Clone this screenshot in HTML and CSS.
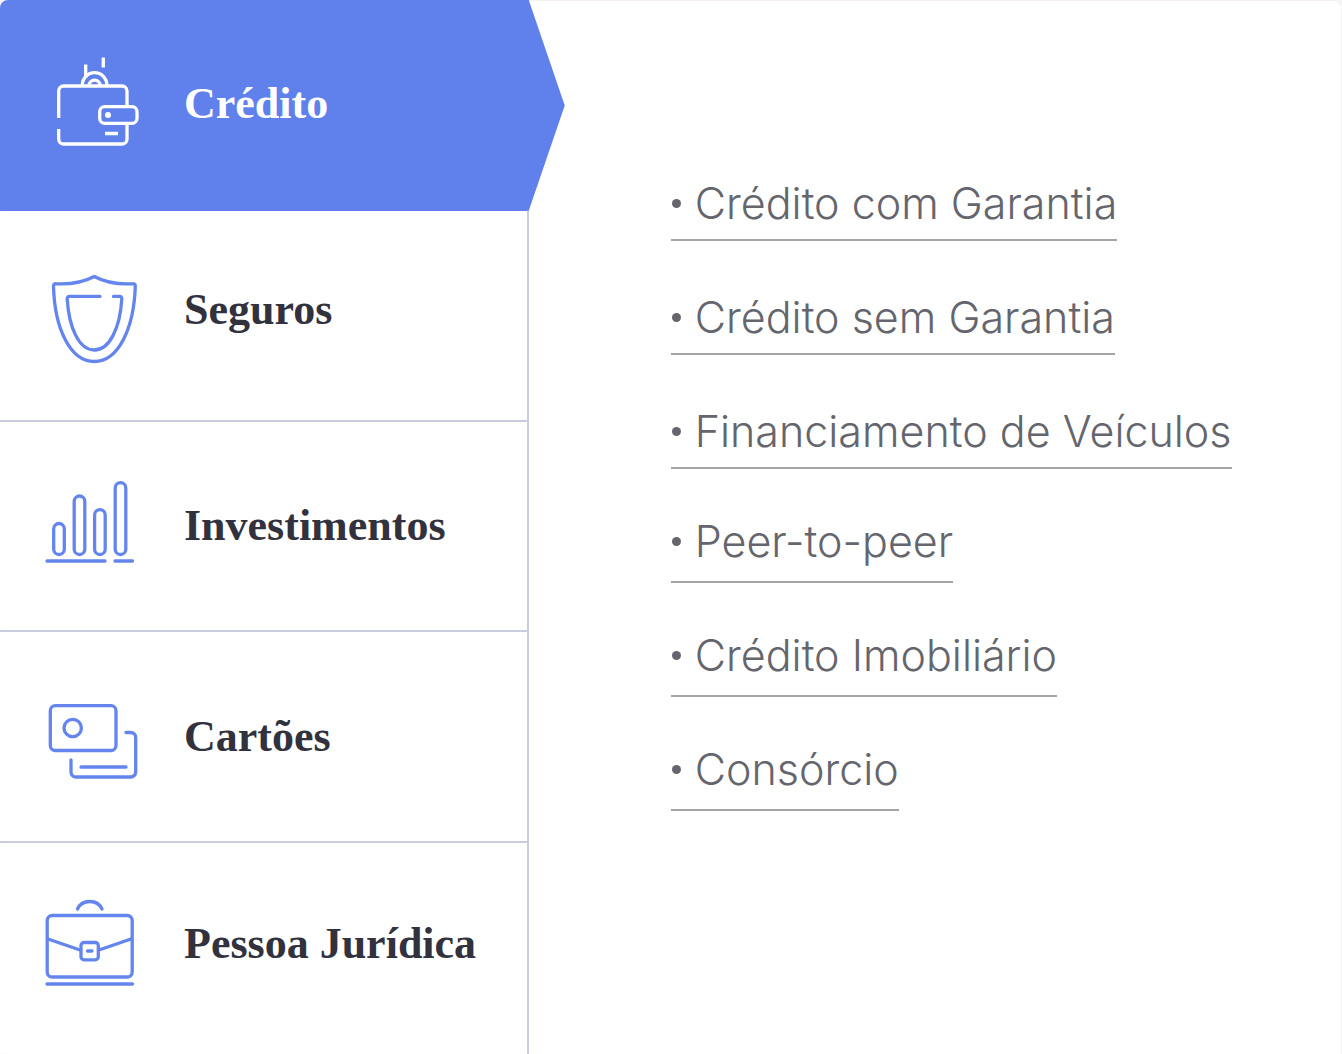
FILE: index.html
```html
<!DOCTYPE html>
<html lang="pt-BR">
<head>
<meta charset="utf-8">
<meta name="viewport" content="width=device-width, initial-scale=1">
<title>Produtos financeiros</title>
<link rel="stylesheet" href="styles.css">
</head>
<body>
<main class="panel">
  <nav class="tabs" aria-label="Categorias">
    <button class="tab tab--active" type="button" aria-pressed="true">
      <svg class="tab__icon" viewBox="40 44 104 120" aria-hidden="true">
        <path d="M58.7 118V91a5 5 0 0 1 5-5H122a5 5 0 0 1 5 5v15M58.7 129v10a5 5 0 0 0 5 5H122a5 5 0 0 0 5-5v-15"/>
        <rect x="99.7" y="106.7" width="37.3" height="16.6" rx="5"/>
        <path d="M82.3 86v-1a12.3 12.3 0 0 1 24.6 0v1M88.8 86a5.8 5.8 0 0 1 11.6 0M85.7 64.5V78M103.3 57.5V67.500M105 133.500h13"/>
        <circle class="solid" cx="108" cy="115" r="3"/>
      </svg>
      <span class="tab__label">Crédito</span>
    </button>
    <button class="tab tab--raised" type="button" aria-pressed="false">
      <svg class="tab__icon" viewBox="40 255 104 120" aria-hidden="true">
        <path d="M94.300 276.500Q78 285 56 283.800Q53.500 283.500 53.500 286C54.500 328 70 361.500 94.300 361.500S134 328 135.300 286Q135.300 283.500 132.600 283.800Q110 285 94.300 276.500Z"/>
        <path class="round" d="M100 296.400H69.500Q67 296.400 67.200 299C69 328 79 350 94.300 350S120 328 121.800 299Q122 296.400 119.500 296.400H113.500"/>
      </svg>
      <span class="tab__label">Seguros</span>
    </button>
    <button class="tab" type="button" aria-pressed="false">
      <svg class="tab__icon" viewBox="40 466 104 120" aria-hidden="true">
        <rect x="53.700" y="523.500" width="10.600" height="31" rx="5.300"/>
        <rect x="74.200" y="496" width="10.600" height="58.500" rx="5.300"/>
        <rect x="94.600" y="509.700" width="10.600" height="44.800" rx="5.300"/>
        <rect x="115.200" y="482.700" width="10.600" height="71.800" rx="5.300"/>
        <path class="round" d="M47 561h58M115 561h17.500"/>
      </svg>
      <span class="tab__label">Investimentos</span>
    </button>
    <button class="tab" type="button" aria-pressed="false">
      <svg class="tab__icon" viewBox="40 677 104 120" aria-hidden="true">
        <rect x="50.300" y="705.700" width="65.700" height="44.800" rx="5"/>
        <circle cx="72.700" cy="728" r="8.700"/>
        <path class="round" d="M71 760v12a5 5 0 0 0 5 5h54.700a5 5 0 0 0 5-5v-34.500a5 5 0 0 0-5-5H126M81 767h45"/>
      </svg>
      <span class="tab__label">Cartões</span>
    </button>
    <button class="tab tab--raised" type="button" aria-pressed="false">
      <svg class="tab__icon" viewBox="40 889 104 120" aria-hidden="true">
        <rect x="47.200" y="915.500" width="85" height="61.500" rx="5"/>
        <rect x="81" y="942.500" width="17.300" height="17.300" rx="3"/>
        <path class="round" d="M77.500 909C82 899 97.500 899 102 909M47 984h85.500M48 939l32 11M99 950l32-11M87.500 951h4.500"/>
      </svg>
      <span class="tab__label">Pessoa Jurídica</span>
    </button>
  </nav>
  <section class="content" aria-label="Crédito">
    <ul class="links">
      <li class="links__item"><a class="link" href="#garantia">Crédito com Garantia</a></li>
      <li class="links__item"><a class="link" href="#sem-garantia">Crédito sem Garantia</a></li>
      <li class="links__item"><a class="link" href="#veiculos">Financiamento de Veículos</a></li>
      <li class="links__item"><a class="link" href="#peer">Peer-to-peer</a></li>
      <li class="links__item"><a class="link" href="#imobiliario">Crédito Imobiliário</a></li>
      <li class="links__item"><a class="link" href="#consorcio">Consórcio</a></li>
    </ul>
  </section>
</main>
</body>
</html>
```
FILE: styles.css
```css
* {
  box-sizing: border-box;
}

body {
  margin: 0;
  background: #f7f4f2;
}

.panel {
  display: grid;
  grid-template-columns: 39.4% 1fr;
  min-height: 100vh;
  background: #fff;
  border-radius: 8px 8px 0 0;
  box-shadow: inset 0 1px 1px #f3f0ee, inset -1px 0 1px #f6f5f8;
}

.tabs {
  display: grid;
  grid-template-rows: repeat(5, 1fr);
  border-right: 2px solid #c9cde0;
}

.tab {
  position: relative;
  display: flex;
  align-items: center;
  gap: 40px;
  min-height: 160px;
  padding: 0 0 0 40px;
  border: 0;
  border-bottom: 2px solid #c9cbe0;
  background: none;
  color: #32323e;
  font: bold 44px/48px "Liberation Serif", serif;
  text-align: left;
  white-space: nowrap;
  cursor: pointer;
}

.tab:last-child {
  border-bottom: 0;
}

.tab--active {
  color: #fff;
  border-bottom-color: #6080eb;
}

.tab--active::before {
  content: "";
  position: absolute;
  inset: 0 -38px -2px 0;
  background: #6080eb;
  border-top-left-radius: 8px;
  clip-path: polygon(0 0, calc(100% - 36px) 0, 100% 50%, calc(100% - 36px) 100%, 0 100%);
}

.tab__icon,
.tab__label {
  position: relative;
}

.tab__icon {
  flex: none;
  width: 104px;
  height: 120px;
  fill: none;
  stroke: #6485ee;
  stroke-width: 3.3;
}

.tab--active .tab__icon {
  stroke: #fff;
}

.tab__icon .solid {
  fill: #fff;
  stroke: none;
}

.tab__icon .round {
  stroke-linecap: round;
}

.tab--raised .tab__label {
  padding-bottom: 10px;
}

.links {
  margin: 0;
  padding: 127px 0 0 142px;
  list-style: none;
}

.links__item {
  display: flex;
  align-items: flex-end;
  height: 114px;
}

.link {
  display: flex;
  align-items: center;
  padding-bottom: 12px;
  border-bottom: 2px solid #a5a5a8;
  color: #65656d;
  font: 300 43px/48px Inter, sans-serif;
  text-decoration: none;
  white-space: nowrap;
}

.links__item:nth-child(n+4) .link {
  padding-bottom: 16px;
}

.link::before {
  content: "";
  width: 9px;
  height: 9px;
  margin: 0 14px 0 1px;
  border-radius: 50%;
  background: #65656d;
}
```
